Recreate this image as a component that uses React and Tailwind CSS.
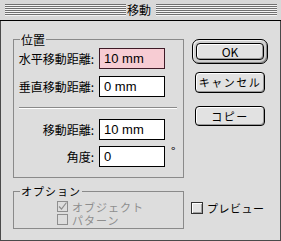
import React from "react";

const LINES = [0, 1, 2, 3, 4, 5];

function TitleLines() {
  return (
    <div className="flex-1 flex flex-col">
      {LINES.map((i) => (
        <div key={i} className="h-[2px] border-t border-[#707070] bg-[#f4f4f4]" />
      ))}
    </div>
  );
}

function Field({ label, value, pink, suffix }) {
  return (
    <div className="flex items-center h-[21px]">
      <div className="w-[80px] text-right text-[12px] leading-[21px] text-black">{label}</div>
      <input
        readOnly
        value={value}
        className={`ml-[5px] w-[66px] h-[21px] border px-[4px] text-[13px] font-['Liberation_Sans',Arial,sans-serif] text-black outline-none ${
          pink ? "bg-[#f7ccd3] border-[#3e1a26]" : "bg-white border-black"
        }`}
      />
      {suffix && <span className="ml-[6px] self-start -mt-[2px] text-[12px] leading-[14px]">{suffix}</span>}
    </div>
  );
}

function DisabledCheck({ checked, label }) {
  return (
    <div className="flex items-center h-[13px]">
      <div className="w-[11px] h-[11px] border border-[#8e8e8e] flex items-center justify-center">
        {checked && (
          <svg width="9" height="9" viewBox="0 0 9 9">
            <path d="M1 4.5 L3.5 7 L8.5 0.5" fill="none" stroke="#8e8e8e" strokeWidth="1.2" />
          </svg>
        )}
      </div>
      <span className="ml-[4px] text-[11px] leading-[12px] tracking-[1px] text-[#8e8e8e]">{label}</span>
    </div>
  );
}

export default function App() {
  return (
    <div className="w-[281px] h-[241px] bg-[#dddddd] flex flex-col font-['Noto_Sans_CJK_JP',sans-serif] text-black select-none">
      {/* タイトルバー */}
      <div className="h-[21px] shrink-0 border-b border-black bg-[#d8d8d8] flex items-center pl-[5px] pr-[4px]">
        <TitleLines />
        <div className="ml-[1px] mr-[5px] text-[12px] leading-[20px]">移動</div>
        <TitleLines />
      </div>

      <div className="flex-1 flex border-l border-r border-b border-[#4a4a4a] pl-[12px] pt-[10px]">
        {/* 左カラム */}
        <div className="w-[171px] flex flex-col">
          <fieldset className="border border-[#8a8a8a] pb-[10px] min-w-0">
            <legend className="ml-[6px] px-[1px] h-[17px] text-[12px] leading-[17px]">位置</legend>
            <Field label="水平移動距離:" value="10 mm" pink />
            <div className="mt-[7px]">
              <Field label="垂直移動距離:" value="0 mm" />
            </div>
            <div className="mt-[10px] ml-[5px] mr-[6px] border-t border-b border-t-[#8a8a8a] border-b-white" />
            <div className="mt-[10px]">
              <Field label="移動距離:" value="10 mm" />
            </div>
            <div className="mt-[6px]">
              <Field label="角度:" value="0" suffix="°" />
            </div>
          </fieldset>

          <fieldset className="mt-[5px] border border-[#8a8a8a] pb-[2px] pl-[43px] min-w-0">
            <legend className="-ml-[37px] px-[1px] h-[17px] text-[11px] leading-[17px] tracking-[1px]">オプション</legend>
            <DisabledCheck checked label="オブジェクト" />
            <DisabledCheck label="パターン" />
          </fieldset>
        </div>

        {/* 右カラム */}
        <div className="ml-[8px] pt-[8px] flex flex-col">
          <div className="w-[76px] h-[25px] rounded-[7px] border border-black bg-[#cfcfcf] p-[3px] shadow-[inset_1px_1px_0_#f2f2f2,inset_-1px_-1px_0_#8a8a8a]">
            <div className="h-full rounded-[4px] border border-black bg-[#e2e2e2] shadow-[inset_1px_1px_0_#ffffff,inset_-1px_-1px_0_#9a9a9a] flex items-center justify-center text-[12px] leading-none">
              OK
            </div>
          </div>
          <div className="mt-[8px] ml-[3px] w-[70px] h-[21px] rounded-[4px] border border-black bg-[#e2e2e2] shadow-[inset_1px_1px_0_#ffffff,inset_-1px_-1px_0_#9a9a9a] flex items-center justify-center text-[11px] tracking-[1.5px] leading-none">
            キャンセル
          </div>
          <div className="mt-[13px] ml-[3px] w-[70px] h-[20px] rounded-[4px] border border-black bg-[#e2e2e2] shadow-[inset_1px_1px_0_#ffffff,inset_-1px_-1px_0_#9a9a9a] flex items-center justify-center text-[11px] tracking-[1.5px] leading-none">
            コピー
          </div>
          <div className="mt-[76px] -ml-[1px] flex items-center h-[12px]">
            <div className="w-[12px] h-[12px] border border-[#333333] bg-[#e4e4e4] shadow-[inset_1px_1px_0_#ffffff,inset_-1px_-1px_0_#a0a0a0]" />
            <span className="ml-[4px] text-[11px] leading-[12px] tracking-[0.5px]">プレビュー</span>
          </div>
        </div>
      </div>
    </div>
  );
}
